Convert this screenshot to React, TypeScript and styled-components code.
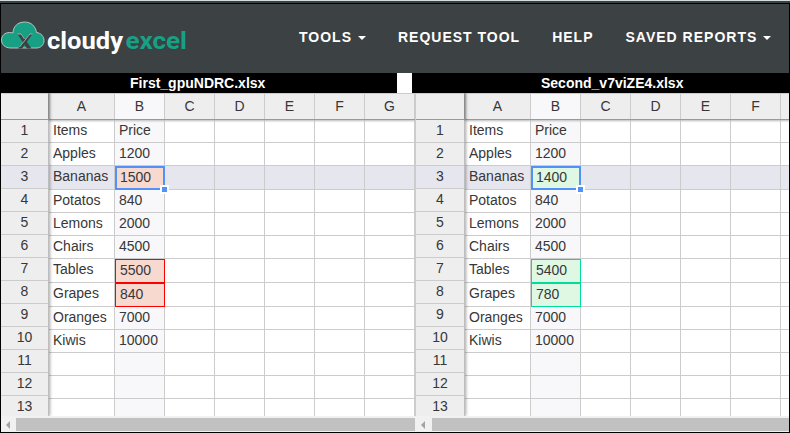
import React from "react";
import styled, { createGlobalStyle, css } from "styled-components";

const GlobalStyle = createGlobalStyle`
  *, *::before, *::after { box-sizing: border-box; }
  body { margin: 0; background: #fff; overflow: hidden; }
`;

const Page = styled.div`
  width: 790px;
  height: 433px;
  display: flex;
  flex-direction: column;
  font: 14px/21px "Liberation Sans", Arial, sans-serif;
  color: #373737;
  overflow: hidden;
`;

const TopStrip = styled.div`
  height: 3px;
  flex: none;
  background: #3c4143;
  border-top: 1px solid #d3dddd;
`;

const Frame = styled.div`
  flex: 1;
  min-height: 0;
  display: flex;
  flex-direction: column;
  border: 1px solid #000;
`;

const NavBar = styled.header`
  height: 69px;
  flex: none;
  display: flex;
  background: #3c4143;
`;

const Logo = styled.svg`
  width: 190px;
  height: 40px;
  margin-top: 12px;
  flex: none;
`;

const NavLinks = styled.nav`
  display: flex;
  gap: 32px;
  padding: 22px 0 0 108px;
`;

const NavLink = styled.span`
  display: flex;
  align-items: center;
  height: 22px;
  color: #fff;
  font-weight: 700;
  letter-spacing: 1px;
  white-space: nowrap;
`;

const Caret = styled.span`
  margin-left: 6px;
  margin-top: 1px;
  border: 4px solid transparent;
  border-top-color: #fff;
  border-bottom: 0;
`;

const Titles = styled.div`
  height: 20px;
  flex: none;
  display: flex;
  gap: 15px;
  background: #fff;
`;

const Title = styled.div<{ $width: number; $indent: number }>`
  width: ${(p) => p.$width}px;
  padding-left: ${(p) => p.$indent}px;
  flex: none;
  background: #000;
  color: #fff;
  font-weight: 700;
`;

const Panes = styled.main`
  display: flex;
  height: 323px;
  flex: none;
`;

const Pane = styled.section<{ $width: number; $divided?: boolean }>`
  width: ${(p) => p.$width}px;
  flex: none;
  display: flex;
  overflow: hidden;
  ${(p) => p.$divided && css`border-left: 1px solid #ccc;`}
`;

const RowHeads = styled.div<{ $width: number }>`
  width: ${(p) => p.$width}px;
  flex: none;
  position: relative;
  z-index: 2;
  background: #eee;
  border-right: 1px solid #bdbdbd;
  box-shadow: 1px 0 3px rgba(0, 0, 0, 0.35);
`;

const Corner = styled.div`
  height: 27px;
  border-top: 1px solid #ccc;
  border-bottom: 1px solid #999;
  box-shadow: 1px 0 2px #777, 0 1px 2px #aaa;
`;

const RowHead = styled.div<{ $active: boolean }>`
  height: 23px;
  border-bottom: 1px solid #ccc;
  text-align: center;
  background: ${(p) => (p.$active ? "#e6e6ef" : "#eee")};
`;

const Sheet = styled.div`
  flex: none;
`;

const Row = styled.div<{ $columns: number; $height: number }>`
  display: grid;
  grid-template-columns: 66px repeat(${(p) => p.$columns - 1}, 50px);
  height: ${(p) => p.$height}px;
`;

const HeadRow = styled(Row)`
  position: relative;
  z-index: 1;
  border-top: 1px solid #ccc;
  border-bottom: 1px solid #999;
  box-shadow: 0 1px 2px #bbb;
`;

const ColumnHead = styled.div<{ $active: boolean }>`
  padding-top: 2px;
  border-right: 1px solid #ccc;
  text-align: center;
  background: ${(p) => (p.$active ? "#f8f8fb" : "#eee")};
`;

const tints = {
  red: { fill: "#f7d9cf", line: "#ff0000" },
  green: { fill: "#dff8e4", line: "#00dc9c" },
};
type Tint = keyof typeof tints;

const Cell = styled.div<{ $row: boolean; $column: boolean; $tint?: Tint }>`
  position: relative;
  padding: 0 4px;
  border: 0 solid #ccc;
  border-width: 0 1px 1px 0;
  white-space: nowrap;
  background: ${(p) => (p.$row ? "#e6e6ef" : p.$column ? "#f8f8fb" : "#fff")};
  ${(p) =>
    p.$tint &&
    css`
      background: ${tints[p.$tint].fill};
      border: 1px solid ${tints[p.$tint].line};
    `}
`;

const Selection = styled.span`
  position: absolute;
  z-index: 1;
  inset: -1px;
  border: 2px solid #5292f7;

  &::after {
    content: "";
    position: absolute;
    right: -6px;
    bottom: -6px;
    width: 9px;
    height: 9px;
    background: #5292f7;
    border: 2px solid #fff;
  }
`;

const ScrollBars = styled.div`
  height: 16px;
  flex: none;
  display: flex;
  background: #f1f1f1;
`;

const ScrollBar = styled.div<{ $width: number; $arrow: number }>`
  width: ${(p) => p.$width}px;
  display: grid;
  grid-template-columns: ${(p) => p.$arrow}px 1fr;
  padding: 2px 0 1px;
`;

const ScrollArrow = styled.span`
  align-self: center;
  justify-self: center;
  margin-right: 2px;
  border: 4px solid transparent;
  border-right-color: #a3a3a3;
  border-left: 0;
`;

const ScrollThumb = styled.div`
  background: #c1c1c1;
`;

const names = ["Items", "Apples", "Bananas", "Potatos", "Lemons", "Chairs", "Tables", "Grapes", "Oranges", "Kiwis", "", "", ""];
const firstPrices = ["Price", "1200", "1500", "840", "2000", "4500", "5500", "840", "7000", "10000", "", "", ""];
const secondPrices = ["Price", "1200", "1400", "840", "2000", "4500", "5400", "780", "7000", "10000", "", "", ""];
const changedRows = [2, 6, 7];
const selectedRow = 2;

function Spreadsheet(props: {
  width: number;
  headWidth: number;
  columns: string;
  prices: string[];
  tint: Tint;
  divided?: boolean;
}) {
  const letters = props.columns.split("");
  return (
    <Pane $width={props.width} $divided={props.divided}>
      <RowHeads $width={props.headWidth}>
        <Corner />
        {names.map((_, i) => (
          <RowHead key={i} $active={i === selectedRow}>{i + 1}</RowHead>
        ))}
      </RowHeads>
      <Sheet>
        <HeadRow $columns={letters.length} $height={27}>
          {letters.map((letter) => (
            <ColumnHead key={letter} $active={letter === "B"}>{letter}</ColumnHead>
          ))}
        </HeadRow>
        {names.map((name, r) => (
          <Row key={r} $columns={letters.length} $height={changedRows.includes(r) ? 24 : 23}>
            {letters.map((letter) => {
              const changed = letter === "B" && changedRows.includes(r);
              return (
                <Cell
                  key={letter}
                  $row={r === selectedRow}
                  $column={letter === "B"}
                  $tint={changed ? props.tint : undefined}
                >
                  {letter === "A" ? name : letter === "B" ? props.prices[r] : ""}
                  {changed && r === selectedRow && <Selection />}
                </Cell>
              );
            })}
          </Row>
        ))}
      </Sheet>
    </Pane>
  );
}

function CloudyLogo() {
  return (
    <Logo viewBox="1 16 190 40">
      <path
        d="M11 48 C5 48 1.500 44.500 1.500 40 C1.500 35.500 5 32.500 9.500 32.500 C11 32.500 12 32.700 13 33 C13 26.500 18 22 24.500 22 C31 22 35.500 26 36.500 32.500 C41 33 44 36.500 44 40.500 C44 45 40.500 48 36.500 48 Z"
        fill="#18a085"
        stroke="#b5c5c3"
        strokeWidth="1"
      />
      <path d="M17.500 34 H21.500 L31.500 48.500 H27 Z" fill="#3c4143" />
      <path d="M29.500 34 H32.500 L22 48.500 H18 Z" fill="#3c4143" />
      <path d="M17.500 34 H21 L24.500 39 M32.500 34 H30 L19.500 47" fill="none" stroke="#b5c5c3" strokeWidth="0.800" />
      <g fontFamily="Roboto, sans-serif" fontWeight="700" fontSize="24">
        <text x="47" y="48.500" fill="#fff" textLength="76" lengthAdjust="spacingAndGlyphs">cloudy</text>
        <text x="125.500" y="48.500" fill="#18a085" textLength="61.500" lengthAdjust="spacingAndGlyphs">excel</text>
      </g>
    </Logo>
  );
}

export default function App() {
  return (
    <Page>
      <GlobalStyle />
      <TopStrip />
      <Frame>
        <NavBar>
          <CloudyLogo />
          <NavLinks>
            <NavLink>TOOLS<Caret /></NavLink>
            <NavLink>REQUEST TOOL</NavLink>
            <NavLink>HELP</NavLink>
            <NavLink>SAVED REPORTS<Caret /></NavLink>
          </NavLinks>
        </NavBar>
        <Titles>
          <Title $width={396} $indent={129}>First_gpuNDRC.xlsx</Title>
          <Title $width={377} $indent={129}>Second_v7viZE4.xlsx</Title>
        </Titles>
        <Panes>
          <Spreadsheet width={414} headWidth={48} columns="ABCDEFG" prices={firstPrices} tint="red" />
          <Spreadsheet width={374} headWidth={49} columns="ABCDEF " prices={secondPrices} tint="green" divided />
        </Panes>
        <ScrollBars>
          <ScrollBar $width={414} $arrow={15}><ScrollArrow /><ScrollThumb /></ScrollBar>
          <ScrollBar $width={374} $arrow={17}><ScrollArrow /><ScrollThumb /></ScrollBar>
        </ScrollBars>
      </Frame>
    </Page>
  );
}
